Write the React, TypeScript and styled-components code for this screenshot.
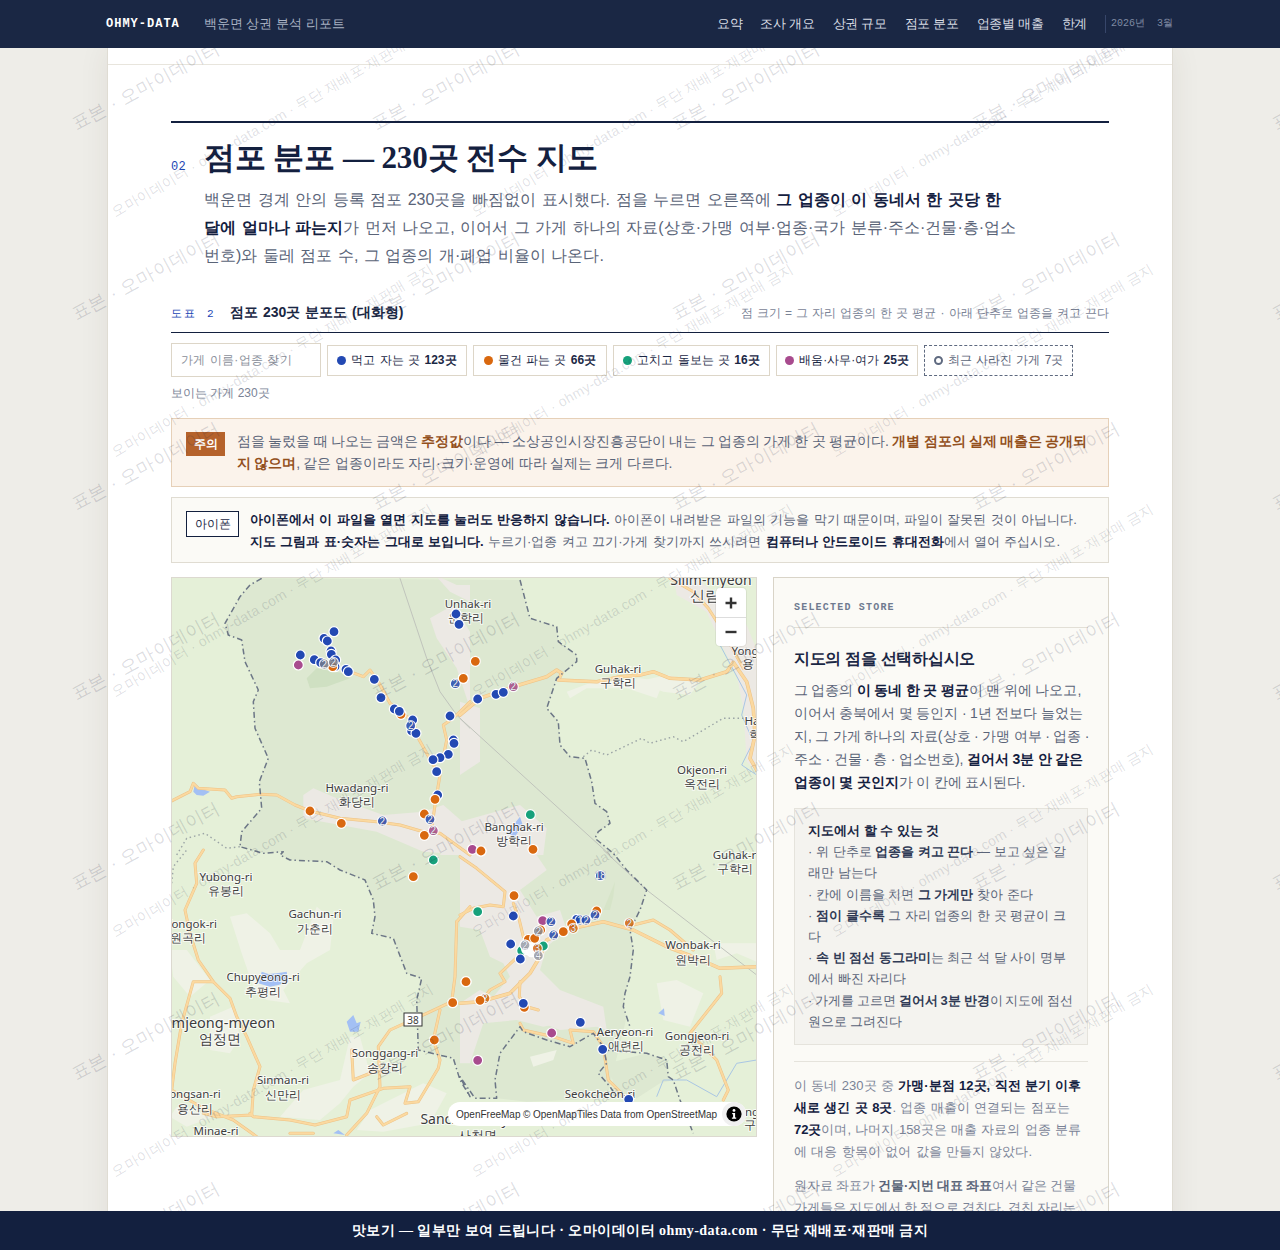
import React from "react";
import styled, { createGlobalStyle } from "styled-components";

const SANS = `"Liberation Sans", sans-serif`;
const SERIF = `"Liberation Serif", serif`;
const MONO = `"Liberation Mono", monospace`;
const NAVY = "#1a2744";
const INK = "#13203f";

const Global = createGlobalStyle`
  html, body { margin: 0; padding: 0; }
  body { background: #eeede8; font-family: ${SANS}; color: #5a6478; }
  * { box-sizing: border-box; }
`;

const Page = styled.div`
  position: relative;
  height: 1250px;
  overflow: hidden;
  background: #eeede8;
`;
const Nav = styled.header`
  position: relative;
  z-index: 5;
  height: 48px;
  background: ${NAVY};
`;
const NavInner = styled.div`
  width: 1066px;
  height: 48px;
  margin: 0 auto;
  display: flex;
  align-items: center;
  color: #fff;
`;
const Brand = styled.span`
  font: 700 12px ${MONO};
  letter-spacing: 1px;
  margin-left: -1px;
  margin-right: 24px;
`;
const NavTitle = styled.span`
  font-size: 13px;
  color: #aab3c4;
  flex: 1;
`;
const NavLinks = styled.nav`
  display: flex;
  gap: 18px;
`;
const NavLink = styled.span`
  font-size: 13px;
  letter-spacing: -0.3px;
  color: #d9dde5;
`;
const NavDate = styled.span`
  margin-left: 18px;
  padding-left: 5px;
  border-left: 1px solid #37466a;
  height: 18px;
  font: 10px/18px ${MONO};
  color: #7f8aa3;
  white-space: pre;
`;
const Sheet = styled.main`
  position: relative;
  width: 1066px;
  height: 1202px;
  margin: 0 auto;
  overflow: hidden;
  background: #fff;
  border-left: 1px solid #dfdcd3;
  border-right: 1px solid #dfdcd3;
`;
const SheetShadow = styled.div`
  width: 1066px;
  margin: 0 auto;
  box-shadow: 0 0 28px rgba(60, 55, 40, 0.08);
`;
const Strip = styled.div`
  height: 17px;
  border-bottom: 1px solid #e8e5dd;
`;
const Section = styled.section`
  margin: 56px 63px 0;
  border-top: 2px solid ${INK};
`;
const HeadRow = styled.div`
  display: flex;
  align-items: flex-end;
  margin-top: 14px;
  height: 42px;
`;
const Num = styled.span`
  width: 33px;
  font: 12px/14px ${MONO};
  letter-spacing: 0.4px;
  color: #2146b4;
  padding-bottom: 5px;
`;
const Title = styled.h2`
  margin: 0;
  font: 700 31px/42px ${SERIF};
  letter-spacing: -0.1px;
  color: ${INK};
`;
const Lead = styled.p`
  margin: 7px 0 0 33px;
  width: 816px;
  font-size: 16px;
  word-spacing: 1.1px;
  line-height: 28px;
  color: #5a6478;
  b { color: ${INK}; font-weight: 700; }
`;
const FigHead = styled.div`
  display: flex;
  align-items: center;
  margin-top: 28px;
  height: 35px;
  padding-bottom: 4px;
  border-bottom: 1px solid ${INK};
`;
const FigNo = styled.span`
  width: 59px;
  font: 11px ${MONO};
  letter-spacing: 1.5px;
  word-spacing: 3px;
  color: #2146b4;
  white-space: pre;
`;
const FigTitle = styled.span`
  flex: 1;
  font-size: 14px;
  word-spacing: 1px;
  font-weight: 700;
  color: ${NAVY};
`;
const FigNote = styled.span`
  font-size: 12px;
  word-spacing: 0.75px;
  color: #7a8396;
`;
const Controls = styled.div`
  display: flex;
  align-items: center;
  gap: 6px;
  margin-top: 10px;
`;
const Search = styled.div`
  width: 150px;
  height: 34px;
  padding-left: 9px;
  border: 1px solid #ddd6c8;
  font-size: 12px;
  letter-spacing: 0.4px;
  line-height: 32px;
  color: #8a8f9a;
`;
const Chip = styled.div<{ $width: number; $dashed?: boolean }>`
  width: ${(p) => p.$width}px;
  height: 31px;
  display: flex;
  align-items: center;
  justify-content: center;
  gap: 5px;
  border: 1px ${(p) => (p.$dashed ? "dashed #5f6a80" : "solid #ddd6c8")};
  font-size: 12px;
  word-spacing: 1px;
  color: ${(p) => (p.$dashed ? "#5a6478" : NAVY)};
  b { font-weight: 700; }
`;
const Dot = styled.i<{ $color: string; $hollow?: boolean }>`
  width: 9px;
  height: 9px;
  border-radius: 50%;
  background: ${(p) => (p.$hollow ? "transparent" : p.$color)};
  border: ${(p) => (p.$hollow ? `2px solid ${p.$color}` : "0")};
`;
const Visible = styled.div`
  margin-top: 8px;
  font-size: 12px;
  line-height: 16px;
  color: #7a8396;
`;
const Note = styled.div<{ $warm?: boolean }>`
  display: flex;
  align-items: flex-start;
  gap: ${(p) => (p.$warm ? 12 : 11)}px;
  margin-top: ${(p) => (p.$warm ? 17 : 10)}px;
  padding: 11px 14px ${(p) => (p.$warm ? 12 : 9)}px;
  background: ${(p) => (p.$warm ? "#fbf3eb" : "#fbfaf6")};
  border: 1px solid ${(p) => (p.$warm ? "#e6d0b8" : "#e0dcd2")};
  font-size: ${(p) => (p.$warm ? 14 : 13)}px;
  word-spacing: ${(p) => (p.$warm ? -0.6 : 0.8)}px;
  line-height: 22px;
  color: #5a6478;
  b { font-weight: 700; color: ${(p) => (p.$warm ? "#93501d" : INK)}; }
`;
const WarnTag = styled.span`
  flex: none;
  width: 39px;
  height: 24px;
  margin-top: 2px;
  background: #b5622b;
  color: #fff;
  font-size: 12px;
  font-weight: 700;
  line-height: 24px;
  text-align: center;
`;
const PhoneTag = styled.span`
  flex: none;
  width: 53px;
  height: 26px;
  margin-top: 2px;
  background: #fff;
  border: 1px solid ${INK};
  color: ${NAVY};
  font-size: 12px;
  line-height: 24px;
  text-align: center;
`;
const NoteText = styled.div`
  flex: 1;
`;
const MapRow = styled.div`
  display: grid;
  grid-template-columns: 586px 336px;
  gap: 16px;
  align-items: start;
  margin-top: 14px;
`;
const MapBox = styled.div`
  position: relative;
  width: 586px;
  height: 560px;
  overflow: hidden;
  border: 1px solid #dcd9d0;
  background: #e5f0d8;
  svg { display: block; }
`;
const ZoomCtl = styled.div`
  position: absolute;
  top: 10px;
  right: 10px;
  width: 30px;
  height: 58px;
  background: #fff;
  border-radius: 4px;
  box-shadow: 0 0 0 1px rgba(0, 0, 0, 0.06);
  display: grid;
  grid-template-rows: 1fr 1fr;
`;
const ZoomBtn = styled.div<{ $top?: boolean }>`
  display: flex;
  align-items: center;
  justify-content: center;
  border-top: ${(p) => (p.$top ? "0" : "1px solid #ddd")};
  color: #333;
`;
const Attrib = styled.div`
  position: absolute;
  left: 276px;
  top: 524px;
  width: 298px;
  height: 24px;
  display: flex;
  align-items: center;
  padding-left: 8px;
  background: #fff;
  border-radius: 12px;
  font: 10px ${SANS};
  word-spacing: -0.2px;
  color: #333;
`;
const InfoBtn = styled.span`
  position: absolute;
  right: 0;
  top: 0;
  width: 24px;
  height: 24px;
  border-radius: 50%;
  background: #f0f0f0;
  display: flex;
  align-items: center;
  justify-content: center;
`;
const Side = styled.aside`
  padding: 20px 20px 0;
  min-height: 700px;
  background: #fbfaf6;
  border: 1px solid #d9d4c8;
`;
const SideLabel = styled.div`
  height: 30px;
  padding-top: 3px;
  border-bottom: 1px solid #e2dfd6;
  font: 700 10px/14px ${MONO};
  letter-spacing: 1.2px;
  color: #6f7a90;
`;
const SideHead = styled.h3`
  margin: 19px 0 0;
  font-size: 16px;
  letter-spacing: -0.3px;
  line-height: 24px;
  font-weight: 700;
  color: ${NAVY};
`;
const SideText = styled.p`
  margin: 8px -4px 0 0;
  font-size: 14px;
  word-spacing: -0.4px;
  line-height: 23px;
  color: #5a6478;
  b { color: ${INK}; font-weight: 700; }
`;
const HowBox = styled.div`
  margin-top: 14px;
  padding: 11px 13px 12px 13px;
  background: #f4f3ef;
  border: 1px solid #e5e3dc;
  font-size: 13px;
  line-height: 21.2px;
  color: #5a6478;
  b { font-weight: 700; color: #2f3a55; }
  strong { font-weight: 700; color: ${NAVY}; display: block; }
`;
const HowItem = styled.div<{ $tight?: boolean }>`
  word-spacing: ${(p) => (p.$tight ? -0.8 : 0)}px;
`;
const SideRule = styled.div`
  margin-top: 16px;
  border-top: 1px solid #e5e3dc;
`;
const SideSmall = styled.p<{ $tight?: boolean }>`
  margin: ${(p) => (p.$tight ? 12 : 13)}px 0 0;
  font-size: 13px;
  word-spacing: ${(p) => (p.$tight ? -0.6 : 0.8)}px;
  line-height: 22px;
  color: #7a8396;
  b { font-weight: 700; color: ${(p) => (p.$tight ? "#5a6478" : INK)}; }
`;
const Keep = styled.b`
  white-space: nowrap;
`;
const Bar = styled.footer`
  position: absolute;
  z-index: 5;
  left: 0;
  right: 0;
  bottom: 0;
  height: 39px;
  background: ${INK};
  color: #fff;
  font: 700 14px/39px ${SERIF};
  letter-spacing: 0.45px;
  text-align: center;
`;
const BigMarks = styled.div`
  position: absolute;
  z-index: 3;
  inset: 48px 0 0 0;
  overflow: hidden;
  pointer-events: none;
`;
const SmallMarks = styled.div`
  position: absolute;
  z-index: 2;
  inset: 0;
  overflow: hidden;
  pointer-events: none;
`;
const BigMark = styled.span`
  position: absolute;
  white-space: nowrap;
  transform-origin: left bottom;
  transform: rotate(-28.4deg);
  font-size: 18px;
  line-height: 20px;
  letter-spacing: 0.5px;
  color: rgba(26, 39, 68, 0.16);
`;
const SmallMark = styled.span`
  position: absolute;
  white-space: nowrap;
  transform-origin: left bottom;
  transform: rotate(-30.2deg);
  font-size: 14px;
  line-height: 16px;
  letter-spacing: 0.3px;
  color: rgba(26, 39, 68, 0.15);
`;

type P = [number, number];
const at = (ox: number, oy: number, pts: number[][]): P[] =>
  pts.map(([x, y]) => [ox + x / 3, oy + y / 3] as P);
const z5 = (p: number[][]) => at(170, 575, p);
const z6 = (p: number[][]) => at(460, 575, p);
const z7 = (p: number[][]) => at(170, 850, p);
const z8 = (p: number[][]) => at(460, 850, p);
const str = (p: P[]) => p.map(([x, y]) => `${x.toFixed(1)},${y.toFixed(1)}`).join(" ");

const west = [
  ...z5([[275,10],[240,30],[210,65],[165,145],[175,180],[215,195],[225,260],[265,345],[250,380],[255,460],[295,550],[268,620],[275,700],[215,770],[210,815],[280,835],[340,830]]),
  ...z7([[330,15],[360,30],[470,35],[510,60],[585,90],[610,150],[615,200],[605,250],[670,265],[710,370],[755,385],[740,450],[745,600],[850,625],[870,690],[900,740]]),
  ...z8([[0,680],[45,745],[110,745],[105,690],[120,610],[180,530],[190,545],[260,570],[330,590],[400,550],[430,590],[440,640],[415,670],[450,710],[470,740]]),
];
const southEast = z8([[430,600],[560,610],[620,630],[625,680],[640,690],[660,750],[700,850]]);
const ne = [
  ...z6([[180,15],[210,130],[290,155],[295,200],[350,240],[350,260],[290,310],[260,400],[295,440],[300,510],[330,545],[375,550],[395,620],[405,685],[440,710],[450,745],[415,770],[405,790],[460,835]]),
  ...z8([[500,60],[560,120],[540,180],[510,240],[520,300],[510,380],[495,430],[490,470],[510,530]]),
];
const forest = [...west.slice(0, 31), ...z8([[0,680],[45,745],[110,745],[200,755],[440,745],[500,500]]), ...[...ne].reverse()];
const southForest = z8([[445,640],[560,610],[620,630],[625,680],[640,690],[600,700],[530,745],[470,740]]);

const dotted = [
  z6([[370,545],[395,525],[440,540],[545,490],[570,505],[640,485],[670,500],[790,430],[850,430]]),
  z5([[20,840],[50,790],[105,775],[170,820],[210,815]]),
  z7([[5,100],[10,50],[50,0]]),
];
const rail = [
  [...z5([[690,10],[740,160],[770,250],[810,350],[860,420],[900,460]])],
  [...z6([[0,430],[230,640],[450,840]])],
  [...z8([[430,0],[560,120],[890,375]])],
];
const roads: P[][] = [
  z5([[0,680],[60,650],[70,625],[85,640],[165,645],[185,670],[200,665],[270,658],[320,660],[375,690],[420,708],[510,730],[620,740],[690,750],[760,770],[810,775],[900,840]]),
  z8([[0,20],[50,55],[135,125],[130,170],[90,165],[40,175],[0,195]]),
  z5([[540,290],[580,305],[600,285],[625,320],[660,385],[730,440],[745,490],[790,570],[810,600],[795,690],[785,760]]),
  z5([[900,380],[850,430],[820,450],[830,495],[820,545]]),
  z6([[0,420],[60,370],[160,335],[260,305],[290,285],[305,295],[295,315],[410,320],[480,305],[540,300],[580,290],[630,310],[720,315],[800,290],[820,262],[860,320],[880,400],[885,480],[870,550],[890,585]]),
  z6([[630,10],[700,50],[745,100],[790,170],[850,280]]),
  z8([[0,460],[60,455],[150,430],[210,370],[240,320],[260,270],[340,235],[430,215],[520,240],[620,290],[700,320],[780,355],[890,350]]),
  z8([[520,225],[580,210],[630,240],[700,300]]),
  z8([[180,395],[178,440],[200,470],[235,480]]),
  z8([[180,520],[190,540],[280,560],[340,580],[330,540],[400,545],[430,590],[445,690],[500,745]]),
  z8([[200,295],[120,370],[135,395],[90,420],[75,440]]),
  z8([[160,160],[178,210],[190,260]]),
  z8([[780,380],[785,430],[690,550],[770,630],[805,720],[790,750]]),
  z7([[860,215],[900,170]]),
  z7([[860,215],[855,380],[845,455],[770,490],[660,540],[625,590],[630,710],[590,790],[530,855]]),
  z7([[810,480],[790,570],[810,630],[805,655],[745,755],[705,760],[720,710],[640,715],[540,750],[530,800],[435,825],[360,810],[250,800],[240,790]]),
  z7([[545,600],[550,690],[625,660]]),
  z7([[100,0],[75,40],[80,100],[45,180],[60,250],[85,330],[130,395],[180,445],[200,500],[230,560],[270,650],[250,720],[245,795],[140,800],[100,790]]),
  z7([[130,395],[70,395],[35,520],[15,640],[5,720],[100,775],[190,810],[260,860]]),
  z7([[620,800],[640,825],[710,790]]),
  z7([[360,850],[430,850]]),
];
const gray: P[][] = [
  z5([[400,660],[430,640],[500,670],[640,720],[760,710],[820,690],[900,760],[900,840],[760,830],[620,770],[400,730]]),
  [...z6([[0,600],[60,560],[60,400],[0,380]])],
  z6([[-60,840],[0,740],[180,690],[260,760],[250,840]]),
  z8([[0,0],[220,0],[260,60],[180,120],[230,200],[300,180],[320,240],[260,290],[240,360],[300,420],[430,470],[440,540],[350,510],[250,530],[170,510],[70,520],[30,640],[0,640],[0,460],[60,420],[100,440],[150,380],[130,340],[90,320],[60,240],[0,230]]),
  z8([[240,470],[420,500],[410,530],[300,540],[200,500]]),
  z6([[640,0],[700,0],[770,60],[860,150],[900,250],[900,600],[860,560],[850,400],[830,300],[790,220],[740,110],[650,60]]),
  z5([[780,130],[850,90],[900,170],[900,400],[860,280],[800,190]]),
  z5([[795,0],[860,30],[900,30],[900,80],[840,50]]),
];
const white: P[][] = [
  z7([[180,200],[230,190],[300,250],[330,300],[390,300],[440,170],[490,210],[480,300],[410,340],[340,420],[360,460],[290,450],[250,410],[215,310]]),
  z7([[0,300],[50,300],[120,390],[60,440],[10,380]]),
  z7([[120,500],[190,470],[210,560],[180,610],[120,600]]),
  z7([[540,560],[570,560],[600,670],[550,710],[510,760],[450,810],[330,800],[400,720],[510,690]]),
  z7([[600,780],[760,700],[830,730],[780,820],[640,845],[560,840]]),
  z8([[590,400],[650,390],[730,430],[690,530],[610,510]]),
  z8([[760,280],[900,280],[900,340],[830,310],[770,330]]),
  z6([[320,350],[400,320],[540,310],[610,320],[590,370],[500,340],[380,340],[330,370]]),
  z6([[530,320],[620,300],[720,320],[690,360],[610,350]]),
  z7([[20,770],[60,780],[130,800],[50,830],[0,800]]),
  z8([[210,620],[290,600],[280,630],[220,650]]),
];
const water: P[][] = [
  z7([[265,400],[275,365],[295,372],[320,370],[350,365],[355,395],[325,405],[300,410]]),
  z7([[530,515],[550,495],[560,520],[572,515],[565,545],[540,545]]),
  z5([[70,650],[75,625],[90,640],[120,650],[100,662],[80,660]]),
  z8([[595,490],[612,475],[614,498]]),
  z6([[168,740],[180,725],[188,750],[165,785],[135,775],[150,765]]),
  z7([[490,850],[505,840],[525,855]]),
];
const BLUE = "#2349b3";
const ORANGE = "#d9680f";
const GREEN = "#16a17b";
const PURPLE = "#a84b8e";

type M = [number, number, string, string?];
const marks: M[] = [
  ...z5([[492,170],[462,190],[472,198],[483,228],[484,238],[391,240],[433,254],[452,263],[497,255],[495,275],[528,283],[535,290],[613,313],[633,368],[673,402],[728,435],[725,468],[738,475],[850,495],[852,505],[835,538],[810,548],[800,590],[803,660],[858,117],[867,148],[840,423]]).map(([x,y]) => [x,y,BLUE] as M),
  ...z5([[693,418]]).map(([x,y]) => [x,y,ORANGE] as M),
  ...z5([[688,409],[789,554]]).map(([x,y]) => [x,y,BLUE] as M),
  ...z5([[488,275],[880,310],[795,673],[763,717],[763,781],[420,708],[514,745]]).map(([x,y]) => [x,y,ORANGE] as M),
  ...z5([[385,270]]).map(([x,y]) => [x,y,PURPLE] as M),
  [...z5([[722,452]])[0], BLUE, "2"],
  [...z5([[856,326]])[0], BLUE, "2"],
  [...z5([[780,733]])[0], BLUE, "2"],
  [...z5([[637,738]])[0], BLUE, "2"],
  [...z5([[790,767]])[0], PURPLE, "2"],
  [...z5([[463,267]])[0], "#777c8c", "2"],
  [...z5([[490,262]])[0], "#777c8c", "2"],
  ...z6([[53,372],[108,358],[130,352]]).map(([x,y]) => [x,y,BLUE] as M),
  ...z6([[46,259],[10,310],[219,823],[63,828]]).map(([x,y]) => [x,y,ORANGE] as M),
  [...z6([[160,335]])[0], PURPLE, "2"],
  ...z6([[37,823]]).map(([x,y]) => [x,y,PURPLE] as M),
  ...z6([[63,828]]).map(([x,y]) => [x,y,ORANGE] as M),
  ...z6([[211,719]]).map(([x,y]) => [x,y,GREEN] as M),
  ...z7([[790,30]]).map(([x,y]) => [x,y,GREEN] as M),
  ...z7([[730,80],[888,395],[848,458],[793,570]]).map(([x,y]) => [x,y,ORANGE] as M),
  ...z8([[162,137],[18,395]]).map(([x,y]) => [x,y,ORANGE] as M),
  [...z8([[75,445]])[0], ORANGE, "2"],
  ...z8([[60,451],[193,472]]).map(([x,y]) => [x,y,ORANGE] as M),
  ...z8([[190,460],[160,198],[152,282],[361,517],[428,598],[506,748]]).map(([x,y]) => [x,y,BLUE] as M),
  ...z8([[53,185],[250,288],[185,302]]).map(([x,y]) => [x,y,GREEN] as M),
  ...z8([[248,212],[275,549],[53,631]]).map(([x,y]) => [x,y,PURPLE] as M),
  [...z8([[273,215]])[0], BLUE, "2"],
  [...z8([[281,255]])[0], BLUE, "2"],
  ...z8([[350,208]]).map(([x,y]) => [x,y,BLUE] as M),
  [...z8([[360,210]])[0], BLUE, "1"],
  [...z8([[378,210]])[0], BLUE, "2"],
  ...z8([[410,183]]).map(([x,y]) => [x,y,ORANGE] as M),
  [...z8([[405,195]])[0], BLUE, "2"],
  ...z8([[310,245],[335,222]]).map(([x,y]) => [x,y,ORANGE] as M),
  [...z8([[340,235]])[0], ORANGE, "3"],
  ...z8([[242,240],[205,268],[224,265]]).map(([x,y]) => [x,y,ORANGE] as M),
  [...z8([[235,243]])[0], "#8b8f99", "2"],
  [...z8([[508,219]])[0], ORANGE, "2"],
  ...z8([[196,285],[210,293],[200,298],[215,305]]).map(([x,y]) => [x,y,"#fdfdfd"] as M),
  [...z8([[232,295]])[0], ORANGE, "3"],
  [...z8([[235,317]])[0], "#9a9ea8", "4"],
  [...z8([[195,285]])[0], "#9a9ea8", "2"],
  ...z8([[181,327]]).map(([x,y]) => [x,y,BLUE] as M),
  [...z8([[421,77]])[0], BLUE, "18"],
];

const labels: [string, number, number, number?][] = [
  ["Silim-myeon", 711, 585, 14],
  ["신림", 705, 601, 15],
  ["Unhak-ri", 468, 608],
  ["운학리", 466, 622],
  ["Guhak-ri", 618, 673],
  ["구학리", 618, 687],
  ["Okjeon-ri", 702, 774],
  ["옥전리", 702, 788],
  ["Hwadang-ri", 357, 792],
  ["화당리", 357, 806],
  ["Banghak-ri", 514, 831],
  ["방학리", 514, 845],
  ["Guhak-ri", 736, 859],
  ["구학리", 735, 873],
  ["Yubong-ri", 226, 881],
  ["유봉리", 226, 895],
  ["Gachun-ri", 315, 918],
  ["가춘리", 315, 933],
  ["Wonbak-ri", 693, 949],
  ["원박리", 693, 964],
  ["Wongok-ri", 189, 928],
  ["원곡리", 188, 942],
  ["Chupyeong-ri", 263, 981],
  ["추평리", 263, 996],
  ["Eomjeong-myeon", 215, 1028, 14.5],
  ["엄정면", 220, 1044, 14],
  ["Songgang-ri", 385, 1057],
  ["송강리", 385, 1072],
  ["Aeryeon-ri", 625, 1036],
  ["애련리", 626, 1050],
  ["Gongjeon-ri", 697, 1040],
  ["공전리", 697, 1054],
  ["Sinman-ri", 283, 1084],
  ["신만리", 283, 1099],
  ["Yongsan-ri", 192, 1098],
  ["용산리", 195, 1113],
  ["Minae-ri", 216, 1135],
  ["Seokcheon-ri", 600, 1098],
  ["Sancheok-myeon", 477, 1124, 14],
  ["사천면", 477, 1140, 13],
  ["Yong", 745, 655],
  ["용", 748, 668],
  ["Ha", 752, 725],
  ["학", 755, 739],
  ["Pung", 745, 1116],
  ["구", 750, 1129],
];

const LabelText = styled.text`
  font-family: "Noto Sans", sans-serif;
  fill: #3d3d3d;
  stroke: #fff;
  stroke-width: 2px;
  stroke-opacity: 0.75;
  paint-order: stroke;
`;
const BadgeText = styled.text`
  font-family: "Liberation Sans", sans-serif;
  font-size: 10px;
  fill: #f1f3f8;
  stroke: #3c4560;
  stroke-width: 0.6px;
  stroke-opacity: 0.5;
  paint-order: stroke;
`;

function MapArt() {
  return (
    <svg width={584} height={558} viewBox="172 578 584 558" aria-label="map">
      <rect x={172} y={578} width={584} height={558} fill="#e5f0d8" />
      <polygon points={str(forest)} fill="#dde8d1" />
      <polygon points={str(southForest)} fill="#dde8d1" />
      <polygon points={str(z5([[410,310],[440,280],[520,295],[540,310],[470,335],[420,340]]))} fill="#cfe0c2" />
      <polygon points={str(z8([[430,180],[465,95],[460,140],[450,180]]))} fill="#d6e4c8" />
      {white.map((p, i) => <polygon key={i} points={str(p)} fill="#eff2e6" />)}
      {gray.map((p, i) => <polygon key={i} points={str(p)} fill="#ece9e4" />)}
      {water.map((p, i) => <polygon key={i} points={str(p)} fill="#a3c0f4" />)}
      {rail.map((p, i) => <polyline key={i} points={str(p)} fill="none" stroke="#c0c4bc" strokeWidth={1} />)}
      <polyline points={str(z8([[590,740],[610,690],[680,690],[770,740],[830,640],[890,630]]))} fill="none" stroke="#a9c6e4" strokeWidth={1} />
      <polyline points={str(z6([[780,210],[860,360],[845,420],[880,500],[845,570],[890,600]]))} fill="none" stroke="#a9c6e4" strokeWidth={1} />
      {roads.map((p, i) => <polyline key={i} points={str(p)} fill="none" stroke="#edc286" strokeWidth={i === 4 || i === 6 ? 3.6 : 3} strokeLinejoin="round" strokeLinecap="round" />)}
      {roads.map((p, i) => <polyline key={i} points={str(p)} fill="none" stroke="#fbd9a0" strokeWidth={i === 4 || i === 6 ? 2.6 : 2} strokeLinejoin="round" strokeLinecap="round" />)}
      {[west, ne, southEast].map((p, i) => <polyline key={i} points={str(p)} fill="none" stroke="#6c7686" strokeWidth={1.5} strokeDasharray="6 3 1.5 3" strokeLinejoin="round" />)}
      {dotted.map((p, i) => <polyline key={i} points={str(p)} fill="none" stroke="#9aa3a5" strokeWidth={1.4} strokeDasharray="1.5 3" />)}
      <rect x={404} y={1013} width={18} height={13} fill="#fff" stroke="#333" strokeWidth={1} />
      <LabelText x={413} y={1024} fontSize={10} textAnchor="middle">38</LabelText>
      {labels.map(([t, x, y, s], i) => (
        <LabelText key={i} x={x} y={y} fontSize={s ?? 11.5} textAnchor="middle">{t}</LabelText>
      ))}
      {marks.map(([x, y, c, n], i) => (
        <g key={i}>
          <circle cx={x} cy={y} r={5} fill={c} stroke="#fff" strokeWidth={1.2} opacity={n ? 0.85 : 1} />
          {n && <BadgeText x={x} y={y + 3.5} textAnchor="middle">{n}</BadgeText>}
        </g>
      ))}
    </svg>
  );
}

const bigPos: P[] = [];
for (let r = 0; r < 7; r++) for (let c = 0; c < 5; c++) bigPos.push([78 + c * 300, 134 + r * 190]);
const smallPos: P[] = [];
for (let r = 0; r < 6; r++) for (let c = 0; c < 4; c++) smallPos.push([9 + c * 360, 172 + r * 240]);

const chips = [
  { w: 140, c: BLUE, t: "먹고 자는 곳", n: "123곳" },
  { w: 134, c: ORANGE, t: "물건 파는 곳", n: "66곳" },
  { w: 157, c: GREEN, t: "고치고 돌보는 곳", n: "16곳" },
  { w: 142, c: PURPLE, t: "배움·사무·여가", n: "25곳" },
];

export default function App() {
  return (
    <Page>
      <Global />
      <Nav>
        <NavInner>
          <Brand>OHMY-DATA</Brand>
          <NavTitle>백운면 상권 분석 리포트</NavTitle>
          <NavLinks>
            {["요약", "조사 개요", "상권 규모", "점포 분포", "업종별 매출", "한계"].map((t) => (
              <NavLink key={t}>{t}</NavLink>
            ))}
          </NavLinks>
          <NavDate>{"2026년  3월"}</NavDate>
        </NavInner>
      </Nav>
      <SheetShadow>
      <Sheet>
        <Strip />
        <Section>
          <HeadRow>
            <Num>02</Num>
            <Title>점포 분포 — 230곳 전수 지도</Title>
          </HeadRow>
          <Lead>
            백운면 경계 안의 등록 점포 230곳을 빠짐없이 표시했다. 점을 누르면 오른쪽에 <b>그 업종이 이 동네서 한 곳당 한 달에 얼마나 파는지</b>가 먼저 나오고, 이어서 그 가게 하나의 자료(상호·가맹 여부·업종·국가 분류·주소·건물·층·업소번호)와 둘레 점포 수, 그 업종의 개·폐업 비율이 나온다.
          </Lead>
          <FigHead>
            <FigNo>도표 2</FigNo>
            <FigTitle>점포 230곳 분포도 (대화형)</FigTitle>
            <FigNote>점 크기 = 그 자리 업종의 한 곳 평균 · 아래 단추로 업종을 켜고 끈다</FigNote>
          </FigHead>
          <Controls>
            <Search>가게 이름·업종 찾기</Search>
            {chips.map((c) => (
              <Chip key={c.t} $width={c.w}>
                <Dot $color={c.c} />
                <span>{c.t} <b>{c.n}</b></span>
              </Chip>
            ))}
            <Chip $width={149} $dashed>
              <Dot $color="#5f6a80" $hollow />
              <span>최근 사라진 가게 7곳</span>
            </Chip>
          </Controls>
          <Visible>보이는 가게 230곳</Visible>
          <Note $warm>
            <WarnTag>주의</WarnTag>
            <NoteText>
              점을 눌렀을 때 나오는 금액은 <b>추정값</b>이다 — 소상공인시장진흥공단이 내는 그 업종의 가게 한 곳 평균이다. <b>개별 점포의 실제 매출은 공개되지 않으며</b>, 같은 업종이라도 자리·크기·운영에 따라 실제는 크게 다르다.
            </NoteText>
          </Note>
          <Note>
            <PhoneTag>아이폰</PhoneTag>
            <NoteText>
              <b>아이폰에서 이 파일을 열면 지도를 눌러도 반응하지 않습니다.</b> 아이폰이 내려받은 파일의 기능을 막기 때문이며, 파일이 잘못된 것이 아닙니다. <b>지도 그림과 표·숫자는 그대로 보입니다.</b> 누르기·업종 켜고 끄기·가게 찾기까지 쓰시려면 <b>컴퓨터나 안드로이드 휴대전화</b>에서 열어 주십시오.
            </NoteText>
          </Note>
          <MapRow>
            <MapBox>
              <MapArt />
              <ZoomCtl>
                <ZoomBtn $top>
                  <svg width="12" height="12" viewBox="0 0 12 12"><path d="M6 .5v11M.5 6h11" stroke="#333" strokeWidth="2.4" /></svg>
                </ZoomBtn>
                <ZoomBtn>
                  <svg width="12" height="12" viewBox="0 0 12 12"><path d="M.5 6h11" stroke="#333" strokeWidth="2.4" /></svg>
                </ZoomBtn>
              </ZoomCtl>
              <Attrib>
                OpenFreeMap © OpenMapTiles Data from OpenStreetMap
                <InfoBtn>
                  <svg width="16" height="16" viewBox="0 0 16 16">
                    <circle cx="8" cy="8" r="7.6" fill="#000" />
                    <circle cx="8" cy="4.4" r="1.4" fill="#fff" />
                    <path d="M6.2 7h2.9v4.6h1.1v1.2H5.9v-1.2h1.2V8.2h-.9z" fill="#fff" />
                  </svg>
                </InfoBtn>
              </Attrib>
            </MapBox>
            <Side>
              <SideLabel>SELECTED STORE</SideLabel>
              <SideHead>지도의 점을 선택하십시오</SideHead>
              <SideText>
                그 업종의 <b>이 동네 한 곳 평균</b>이 맨 위에 나오고, 이어서 충북에서 몇 등인지 · 1년 전보다 늘었는지, 그 가게 하나의 자료(상호 · 가맹 여부 · 업종 · 주소 · 건물 · 층 · 업소번호), <b>걸어서 3분 안 같은 업종이 몇 곳인지</b>가 이 칸에 표시된다.
              </SideText>
              <HowBox>
                <strong>지도에서 할 수 있는 것</strong>
                <HowItem>· 위 단추로 <b>업종을 켜고 끈다</b> — 보고 싶은 갈래만 남는다</HowItem>
                <HowItem>· 칸에 이름을 치면 <b>그 가게만</b> 찾아 준다</HowItem>
                <HowItem>· <b>점이 클수록</b> 그 자리 업종의 한 곳 평균이 크다</HowItem>
                <HowItem>· <b>속 빈 점선 동그라미</b>는 최근 석 달 사이 명부에서 빠진 자리다</HowItem>
                <HowItem $tight>· 가게를 고르면 <b>걸어서 3분 반경</b>이 지도에 점선 원으로 그려진다</HowItem>
              </HowBox>
              <SideRule />
              <SideSmall>
                이 동네 230곳 중 <b>가맹·분점 12곳, 직전 분기 이후 새로 생긴 곳 8곳</b>. 업종 매출이 연결되는 점포는 <Keep>72곳</Keep>이며, 나머지 158곳은 매출 자료의 업종 분류에 대응 항목이 없어 값을 만들지 않았다.
              </SideSmall>
              <SideSmall $tight>
                원자료 좌표가 <b>건물·지번 대표 좌표</b>여서 같은 건물 가게들은 지도에서 한 점으로 겹친다. 겹친 자리는 숫자로 표시했다.
              </SideSmall>
            </Side>
          </MapRow>
        </Section>
        <SmallMarks>
          {smallPos.map(([x, y], i) => (
            <SmallMark key={i} style={{ left: x, top: y - 16 }}>오마이데이터 · ohmy-data.com · 무단 재배포·재판매 금지</SmallMark>
          ))}
        </SmallMarks>
      </Sheet>
      </SheetShadow>
      <BigMarks>
        {bigPos.map(([x, y], i) => (
          <BigMark key={i} style={{ left: x, top: y - 48 - 20 }}>표본 · 오마이데이터</BigMark>
        ))}
      </BigMarks>
      <Bar>맛보기 — 일부만 보여 드립니다 · 오마이데이터 ohmy-data.com · 무단 재배포·재판매 금지</Bar>
    </Page>
  );
}
